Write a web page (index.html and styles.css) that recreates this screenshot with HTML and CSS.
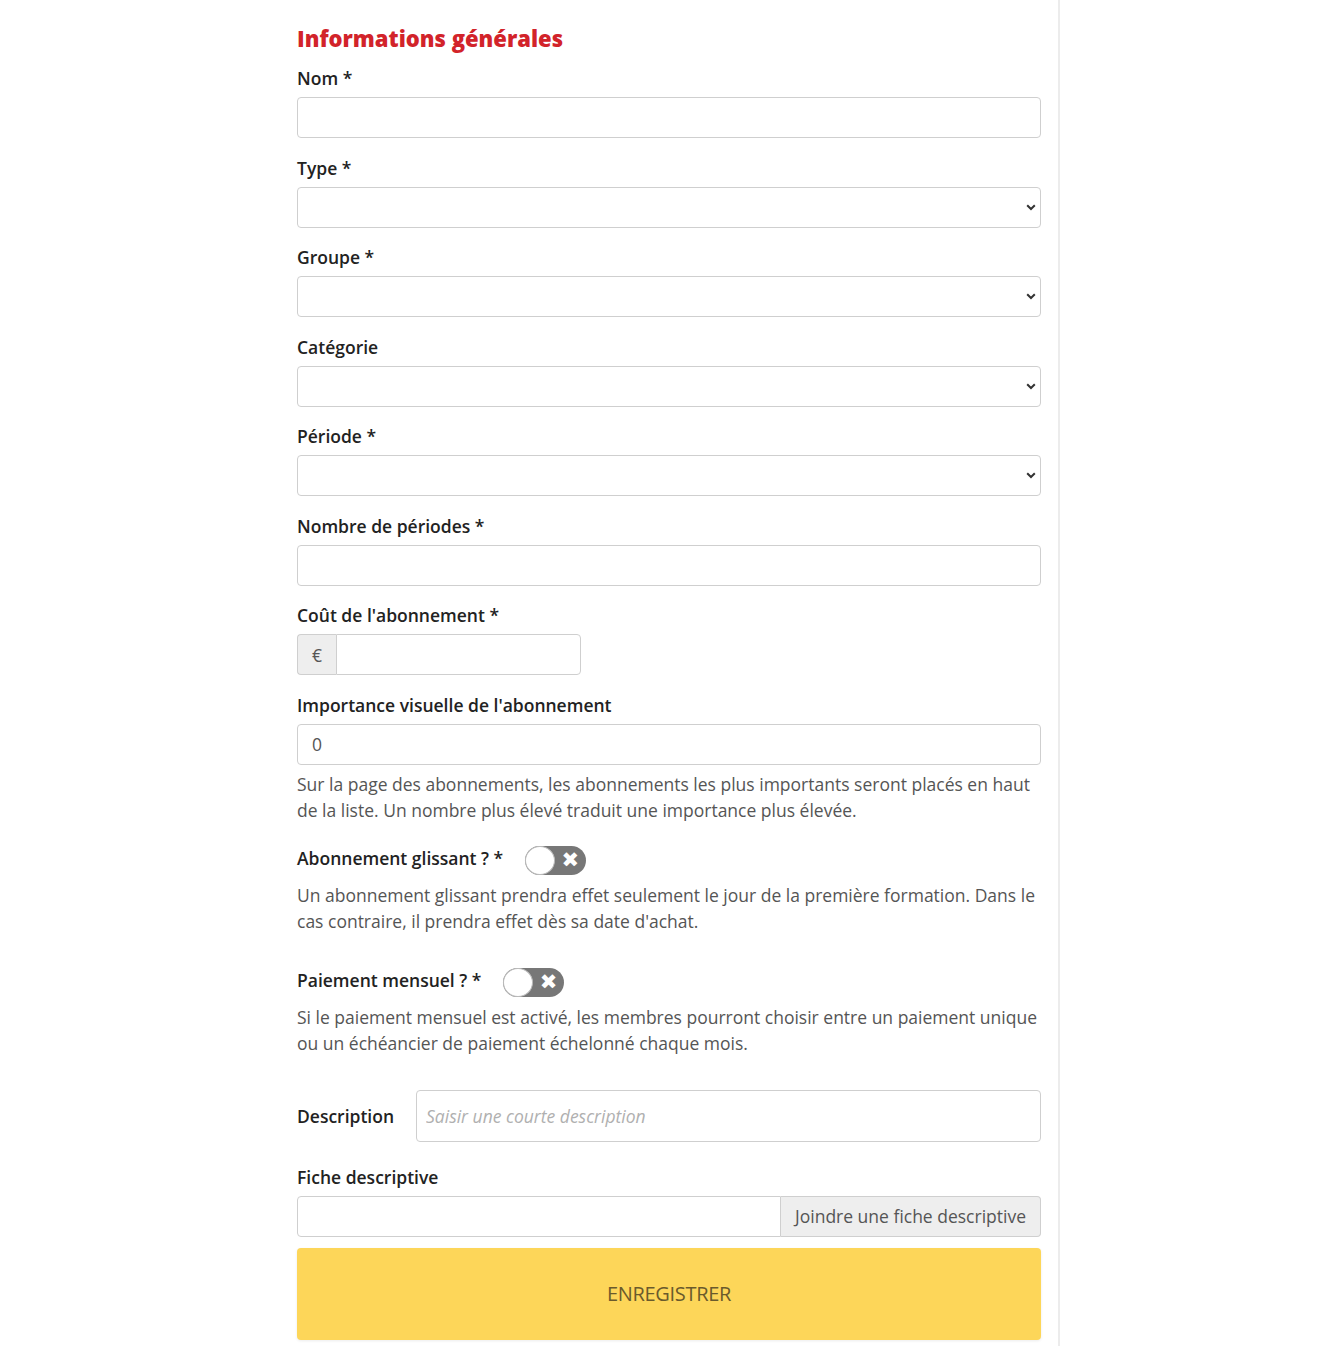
FILE: index.html
```html
<!DOCTYPE html>
<html lang="fr">
<head>
<meta charset="utf-8">
<title>Abonnement</title>
<link rel="stylesheet" href="styles.css">
</head>
<body>
<div class="page">
  <form class="form">
    <h2 class="title">Informations générales</h2>

    <div class="group">
      <label class="label">Nom *</label>
      <input class="control" type="text">
    </div>

    <div class="group">
      <label class="label">Type *</label>
      <div class="select-wrap">
        <select class="control select"><option></option></select>
        <svg class="chev" width="10" height="7" viewBox="0 0 10 7"><path d="M1.2 1.2 L5 5 L8.8 1.2" fill="none" stroke="#333" stroke-width="2"/></svg>
      </div>
    </div>

    <div class="group">
      <label class="label">Groupe *</label>
      <div class="select-wrap">
        <select class="control select"><option></option></select>
        <svg class="chev" width="10" height="7" viewBox="0 0 10 7"><path d="M1.2 1.2 L5 5 L8.8 1.2" fill="none" stroke="#333" stroke-width="2"/></svg>
      </div>
    </div>

    <div class="group">
      <label class="label">Catégorie</label>
      <div class="select-wrap">
        <select class="control select"><option></option></select>
        <svg class="chev" width="10" height="7" viewBox="0 0 10 7"><path d="M1.2 1.2 L5 5 L8.8 1.2" fill="none" stroke="#333" stroke-width="2"/></svg>
      </div>
    </div>

    <div class="group">
      <label class="label">Période *</label>
      <div class="select-wrap">
        <select class="control select"><option></option></select>
        <svg class="chev" width="10" height="7" viewBox="0 0 10 7"><path d="M1.2 1.2 L5 5 L8.8 1.2" fill="none" stroke="#333" stroke-width="2"/></svg>
      </div>
    </div>

    <div class="group">
      <label class="label">Nombre de périodes *</label>
      <input class="control" type="text">
    </div>

    <div class="group">
      <label class="label">Coût de l'abonnement *</label>
      <div class="input-group price">
        <span class="addon">€</span>
        <input class="control joined" type="text">
      </div>
    </div>

    <div class="group tight">
      <label class="label">Importance visuelle de l'abonnement</label>
      <input class="control" type="text" value="0">
      <p class="help">Sur la page des abonnements, les abonnements les plus importants seront placés en haut de la liste. Un nombre plus élevé traduit une importance plus élevée.</p>
    </div>

    <div class="switch-group first">
      <div class="switch-row">
        <span class="label inline">Abonnement glissant ? *</span>
        <span class="toggle"><span class="knob"></span><span class="x">✖</span></span>
      </div>
      <p class="help">Un abonnement glissant prendra effet seulement le jour de la première formation. Dans le cas contraire, il prendra effet dès sa date d'achat.</p>
    </div>

    <div class="switch-group second">
      <div class="switch-row">
        <span class="label inline">Paiement mensuel ? *</span>
        <span class="toggle"><span class="knob"></span><span class="x">✖</span></span>
      </div>
      <p class="help">Si le paiement mensuel est activé, les membres pourront choisir entre un paiement unique ou un échéancier de paiement échelonné chaque mois.</p>
    </div>

    <div class="desc-row">
      <label class="label inline desc-label">Description</label>
      <input class="control desc" type="text" placeholder="Saisir une courte description">
    </div>

    <div class="group file">
      <label class="label">Fiche descriptive</label>
      <div class="input-group">
        <input class="control joined-left" type="text">
        <span class="file-btn">Joindre une fiche descriptive</span>
      </div>
    </div>

    <button class="submit" type="button">ENREGISTRER</button>
  </form>
</div>
</body>
</html>
```

FILE: styles.css
```css
* { box-sizing: border-box; }

html, body {
  margin: 0;
  padding: 0;
  background: #fff;
}

body {
  font-family: "Open Sans", "Liberation Sans", sans-serif;
  color: #222;
  font-size: 17.5px;
}

.page {
  width: 1060px;
  padding-left: 280px;
}

.form {
  border-right: 2px solid #ececec;
  padding: 24px 17px 6px 17px;
  width: 780px;
}

.title {
  margin: 0 0 14px 0;
  font-size: 22px;
  line-height: 28px;
  font-weight: 800;
  color: #d2232a;
}

.group {
  margin-bottom: 17.5px;
}

.group.tight {
  margin-bottom: 0;
}

.label {
  display: block;
  font-weight: 600;
  font-size: 17.5px;
  line-height: 24px;
  margin-bottom: 7px;
  color: #222;
}

.label.inline {
  display: inline-block;
  margin-bottom: 0;
}

.control {
  display: block;
  width: 100%;
  height: 41px;
  border: 1px solid #cfcfcf;
  border-radius: 4px;
  background: #fff;
  font-family: "Open Sans", "Liberation Sans", sans-serif;
  font-size: 17.5px;
  color: #555;
  padding: 0 14px;
  outline: none;
}

.select-wrap {
  position: relative;
}

.select {
  appearance: none;
  -webkit-appearance: none;
}

.chev {
  position: absolute;
  right: 5px;
  top: 17px;
}

.input-group {
  display: flex;
}

.price {
  width: 284px;
}

.addon {
  width: 39px;
  height: 41px;
  display: flex;
  align-items: center;
  justify-content: center;
  background: #eee;
  border: 1px solid #cfcfcf;
  border-right: none;
  border-radius: 4px 0 0 4px;
  color: #555;
  font-size: 17.5px;
  flex: none;
}

.control.joined {
  flex: 1;
  border-radius: 0 4px 4px 0;
}

.control.joined-left {
  flex: 1;
  border-radius: 4px 0 0 4px;
}

.file-btn {
  flex: none;
  width: 260px;
  height: 41px;
  display: flex;
  align-items: center;
  justify-content: center;
  background: #eee;
  border: 1px solid #cfcfcf;
  border-left: none;
  border-radius: 0 4px 4px 0;
  color: #555;
  font-size: 17.5px;
}

.help {
  margin: 6px 0 0 0;
  font-size: 17.5px;
  line-height: 26px;
  color: #555;
}

.switch-group.first {
  margin-top: 23px;
}

.switch-group.second {
  margin-top: 34px;
}

.switch-row {
  display: flex;
  align-items: center;
  gap: 22px;
  height: 29px;
}

.switch-row .label {
  position: relative;
  top: -2px;
}

.switch-group .help {
  margin-top: 7px;
}

.toggle {
  position: relative;
  width: 61px;
  height: 29px;
  border-radius: 15px;
  background: #777;
  display: inline-block;
}

.knob {
  position: absolute;
  left: 0;
  top: 0;
  width: 30px;
  height: 29px;
  border-radius: 50%;
  background: #fff;
  border: 1px solid #bbb;
}

.x {
  position: absolute;
  right: 7px;
  top: 0;
  line-height: 29px;
  color: #fff;
  font-size: 21px;
  font-family: "DejaVu Sans", sans-serif;
}

.desc-row {
  display: flex;
  align-items: center;
  margin-top: 34px;
  margin-bottom: 23px;
}

.desc-label {
  width: 119px;
  flex: none;
}

.control.desc {
  flex: 1;
  height: 52px;
  padding: 0 9px;
}

.control.desc::placeholder {
  color: #b0b0b0;
  font-style: italic;
}

.group.file {
  margin-bottom: 11px;
}

.submit {
  display: block;
  width: 100%;
  height: 92px;
  border: none;
  border-radius: 4px;
  background: #fdd659;
  color: #6a5a2c;
  font-family: "Open Sans", "Liberation Sans", sans-serif;
  font-size: 20px;
  letter-spacing: -0.3px;
  box-shadow: 0 1px 3px rgba(0,0,0,0.08);
  cursor: pointer;
}
```
